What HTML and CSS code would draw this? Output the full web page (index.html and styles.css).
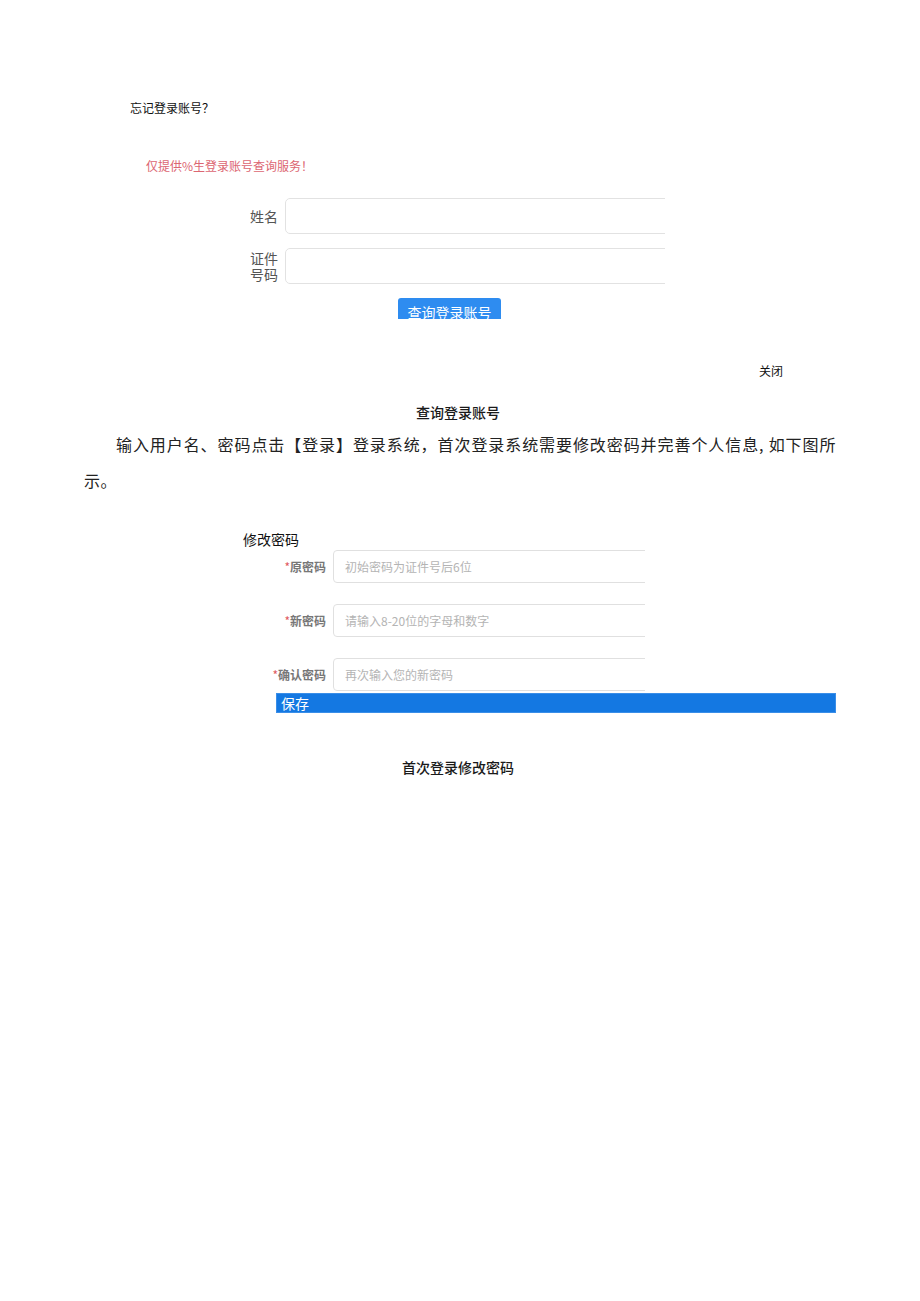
FILE: index.html
```html
<!DOCTYPE html>
<html lang="zh-CN">
<head>
    <meta charset="UTF-8">
    <title>登录说明</title>
    <link rel="stylesheet" href="styles.css">
</head>
<body>

    <!-- 找回账号弹窗 -->
    <div class="forgot">
        <div class="forgot-title">忘记登录账号？</div>
        <div class="notice">仅提供%生登录账号查询服务！</div>

        <div class="lookup-form">
            <div class="form-row">
                <label class="form-label">姓名</label>
                <div class="field-clip"><div class="field"></div></div>
            </div>
            <div class="form-row">
                <label class="form-label form-label-wrap">证件号码</label>
                <div class="field-clip"><div class="field"></div></div>
            </div>
        </div>

        <div class="lookup-btn-clip">
            <button class="lookup-btn">查询登录账号</button>
        </div>

        <div class="close">关闭</div>
    </div>

    <p class="caption caption-first">查询登录账号</p>

    <p class="para">输入用户名、密码点击【登录】登录系统，首次登录系统需要修改密码并完善个人信息, 如下图所示。</p>

    <!-- 修改密码表单 -->
    <div class="pwd">
        <div class="pwd-title">修改密码</div>
        <div class="pwd-rows">
            <div class="pwd-row">
                <span class="pwd-label"><i>*</i>原密码</span>
                <div class="pwd-clip"><div class="pwd-field">初始密码为证件号后6位</div></div>
            </div>
            <div class="pwd-row">
                <span class="pwd-label"><i>*</i>新密码</span>
                <div class="pwd-clip"><div class="pwd-field">请输入8-20位的字母和数字</div></div>
            </div>
            <div class="pwd-row">
                <span class="pwd-label"><i>*</i>确认密码</span>
                <div class="pwd-clip"><div class="pwd-field">再次输入您的新密码</div></div>
            </div>
        </div>
        <div class="save-bar">保存</div>
    </div>

    <p class="caption caption-second">首次登录修改密码</p>

</body>
</html>
```

FILE: styles.css
```css
body {
    margin: 0;
    background-color: #fff;
    color: #111;
    font-family: "Noto Sans CJK SC", "Liberation Sans", sans-serif;
}

/* 找回账号 */
.forgot {
    padding: 100px 0 0 130px;
    width: 653px;
}

.forgot-title {
    font-size: 12px;
    line-height: 16px;
}

.notice {
    margin: 42px 0 0 16px;
    font-size: 12px;
    line-height: 16px;
    color: #dc6672;
}

.lookup-form {
    margin: 24px 0 0 120px;
    display: flex;
    flex-direction: column;
    gap: 14px;
}

.form-row {
    display: flex;
    align-items: center;
    gap: 6px;
}

.form-label {
    width: 29px;
    font-size: 14px;
    line-height: 16px;
    color: #555;
}

/* 四个字的标签折成两行 */
.form-label-wrap {
    word-break: break-all;
}

.field-clip {
    width: 380px;
    height: 36px;
    overflow: hidden;
}

.field {
    width: 400px;
    height: 36px;
    box-sizing: border-box;
    border: 1px solid #e2e2e2;
    border-radius: 5px;
}

.lookup-btn-clip {
    margin: 14px 0 0 268px;
    width: 103px;
    height: 21px;
    overflow: hidden;
}

.lookup-btn {
    width: 103px;
    height: 32px;
    box-sizing: border-box;
    padding: 0 0 4px;
    border: none;
    border-radius: 3px;
    background-color: #2e8cf0;
    color: #fff;
    font-family: inherit;
    font-size: 14px;
    line-height: 20px;
    text-align: center;
    display: block;
}

.close {
    margin-top: 44px;
    text-align: right;
    font-size: 12px;
    line-height: 16px;
}

/* 正文 */
.caption {
    margin: 0;
    text-align: center;
    font-size: 14px;
    line-height: 20px;
    font-weight: 500;
    color: #1a1a1a;
    padding-right: 4px;
}

.caption-first {
    margin-top: 23px;
}

.caption-second {
    margin-top: 44px;
}

.para {
    margin: 4px 0 0 84px;
    width: 752px;
    font-size: 16px;
    line-height: 36px;
    letter-spacing: 0.6px;
    text-indent: 2em;
    text-align: justify;
    color: #222;
}

/* 修改密码 */
.pwd {
    margin: 31px 0 0 243px;
}

.pwd-title {
    font-size: 14px;
    line-height: 20px;
}

.pwd-rows {
    margin-top: 1px;
    display: flex;
    flex-direction: column;
    gap: 21px;
}

.pwd-row {
    display: flex;
    align-items: center;
    gap: 7px;
}

.pwd-label {
    width: 83px;
    text-align: right;
    font-size: 12px;
    font-weight: 700;
    color: #777;
}

.pwd-label i {
    font-style: normal;
    color: #e05a62;
    font-weight: 400;
}

.pwd-clip {
    width: 312px;
    height: 33px;
    overflow: hidden;
}

.pwd-field {
    width: 330px;
    height: 33px;
    box-sizing: border-box;
    border: 1px solid #e0e0e0;
    border-radius: 4px;
    padding-left: 11px;
    font-size: 12px;
    line-height: 31px;
    color: #b4b4b4;
}

.save-bar {
    margin: 2px 0 0 33px;
    width: 560px;
    height: 20px;
    box-sizing: border-box;
    padding-left: 4px;
    background-color: #1478e2;
    border: 1px solid #3a8ee8;
    color: #fff;
    font-size: 14px;
    line-height: 18px;
}
```
